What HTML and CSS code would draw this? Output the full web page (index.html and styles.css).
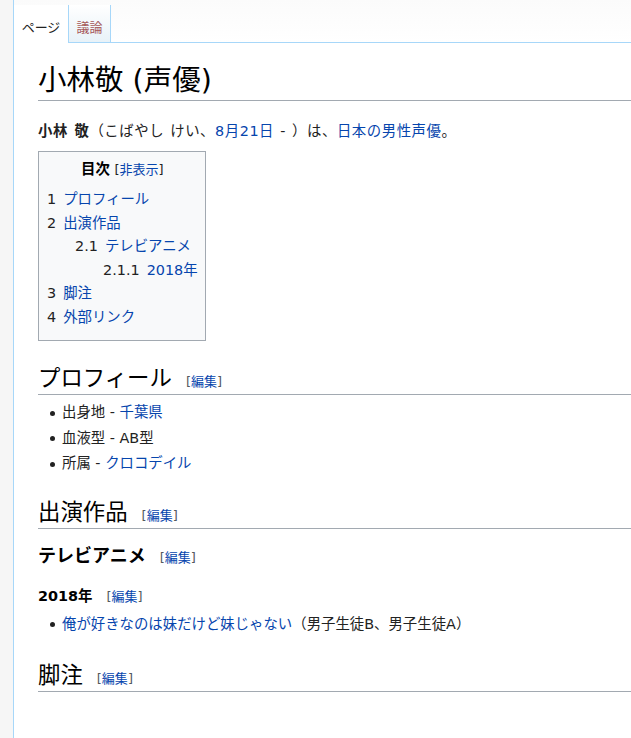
FILE: index.html
```html
<!DOCTYPE html>
<html lang="ja">
<head>
<meta charset="utf-8">
<title>小林敬 (声優)</title>
<link rel="stylesheet" href="styles.css">
</head>
<body>
<div class="frame">
  <div class="tabs">
    <a class="tab tab-selected">ページ</a>
    <a class="tab tab-new">議論</a>
    <div class="tab-fill"></div>
  </div>
  <div class="content">
    <h1 class="title">小林敬 (声優)</h1>
    <p class="lead"><b>小林 敬</b>（こばやし けい、<a class="link">8月21日</a> - ）は、<a class="link">日本の</a><a class="link">男性</a><a class="link">声優</a>。</p>

    <div class="toc">
      <div class="toc-title"><b>目次</b> <span class="toc-toggle">[<a class="link">非表示</a>]</span></div>
      <ul class="toc-list">
        <li><span class="num">1</span><a class="link">プロフィール</a></li>
        <li><span class="num">2</span><a class="link">出演作品</a>
          <ul class="toc-list toc-sub">
            <li><span class="num">2.1</span><a class="link">テレビアニメ</a>
              <ul class="toc-list toc-sub">
                <li><span class="num">2.1.1</span><a class="link">2018年</a></li>
              </ul>
            </li>
          </ul>
        </li>
        <li><span class="num">3</span><a class="link">脚注</a></li>
        <li><span class="num">4</span><a class="link">外部リンク</a></li>
      </ul>
    </div>

    <h2 class="h2 first">プロフィール<span class="edit">[<a class="link">編集</a>]</span></h2>
    <ul class="bullets">
      <li>出身地 - <a class="link">千葉県</a></li>
      <li>血液型 - AB型</li>
      <li>所属 - <a class="link">クロコデイル</a></li>
    </ul>

    <h2 class="h2">出演作品<span class="edit">[<a class="link">編集</a>]</span></h2>
    <h3 class="h3">テレビアニメ<span class="edit">[<a class="link">編集</a>]</span></h3>
    <h4 class="h4">2018年<span class="edit">[<a class="link">編集</a>]</span></h4>
    <ul class="bullets">
      <li><a class="link">俺が好きなのは妹だけど妹じゃない</a>（男子生徒B、男子生徒A）</li>
    </ul>

    <h2 class="h2 last">脚注<span class="edit">[<a class="link">編集</a>]</span></h2>
  </div>
</div>
</body>
</html>
```

FILE: styles.css
```css
html, body {
  margin: 0;
  padding: 0;
}
body {
  background: #f6f6f6;
  font-family: "DejaVu Sans", "Noto Sans CJK JP", sans-serif;
  color: #222;
}
.frame {
  margin-left: 13px;
  border-left: 1px solid #a7d7f9;
  background: #fff;
  min-height: 738px;
  box-sizing: border-box;
}
.tabs {
  display: flex;
  align-items: flex-end;
  height: 43px;
  background: linear-gradient(to bottom, #fbfbfb 0%, #fff 100%);
}
.tab {
  display: block;
  box-sizing: border-box;
  height: 38px;
  padding-top: 13px;
  font-size: 13px;
  line-height: 20px;
  text-align: center;
}
.tab-selected {
  width: 54px;
  background: #fff;
  color: #222;
}
.tab-new {
  width: 43px;
  color: #a55858;
  border-left: 1px solid #a7d7f9;
  border-right: 1px solid #a7d7f9;
  border-bottom: 1px solid #a7d7f9;
  background: linear-gradient(to bottom, #ffffff 0%, #e8f2f8 100%);
}
.tab-fill {
  flex: 1;
  border-bottom: 1px solid #a7d7f9;
}
.content {
  padding: 20px 0 40px 24px;
  font-size: 14.4px;
}
.link {
  color: #0645ad;
  text-decoration: none;
}
.title {
  margin: 0;
  font-size: 28.5px;
  font-weight: normal;
  line-height: 36px;
  padding-bottom: 1px;
  color: #000;
  border-bottom: 1px solid #a2a9b1;
}
.lead {
  margin: 19px 0 0;
  line-height: 22px;
  word-spacing: 1px;
  letter-spacing: 0.55px;
}
.toc {
  display: inline-block;
  margin-top: 9px;
  border: 1px solid #a2a9b1;
  background: #f8f9fa;
  padding: 7px 7px 11px 8px;
}
.toc-title {
  text-align: center;
  line-height: 20px;
  margin-bottom: 9px;
  color: #000;
}
.toc-toggle {
  font-size: 13px;
  line-height: 1;
  color: #222;
}
.toc-list {
  list-style: none;
  margin: 0;
  padding: 0;
  line-height: 23.5px;
}
.toc-sub {
  margin-left: 28px;
}
.num {
  color: #222;
  padding-right: 7px;
}
.h2 {
  margin: 20px 0 5px;
  font-size: 22.4px;
  font-weight: normal;
  line-height: 30px;
  padding-bottom: 1px;
  color: #000;
  border-bottom: 1px solid #a2a9b1;
}
.h2.first {
  margin-top: 22px;
}
.h2.last {
  margin-top: 23px;
}
.edit {
  font-size: 13px;
  line-height: 1;
  margin-left: 14px;
  font-weight: normal;
  letter-spacing: 0;
  color: #54595d;
}
.h3 {
  margin: 15px 0 0;
  font-size: 18px;
  font-weight: bold;
  line-height: 24px;
  color: #000;
}
.h4 {
  margin: 17px 0 5px;
  font-size: 14.4px;
  font-weight: bold;
  line-height: 22px;
  color: #000;
}
.bullets {
  margin: 0;
  padding: 0 0 0 24px;
  list-style: none;
  line-height: 25.5px;
}
.bullets li::before {
  content: "";
  display: inline-block;
  width: 5px;
  height: 5px;
  border-radius: 50%;
  background: #222;
  margin-left: -12px;
  margin-right: 7px;
  vertical-align: middle;
}
```
